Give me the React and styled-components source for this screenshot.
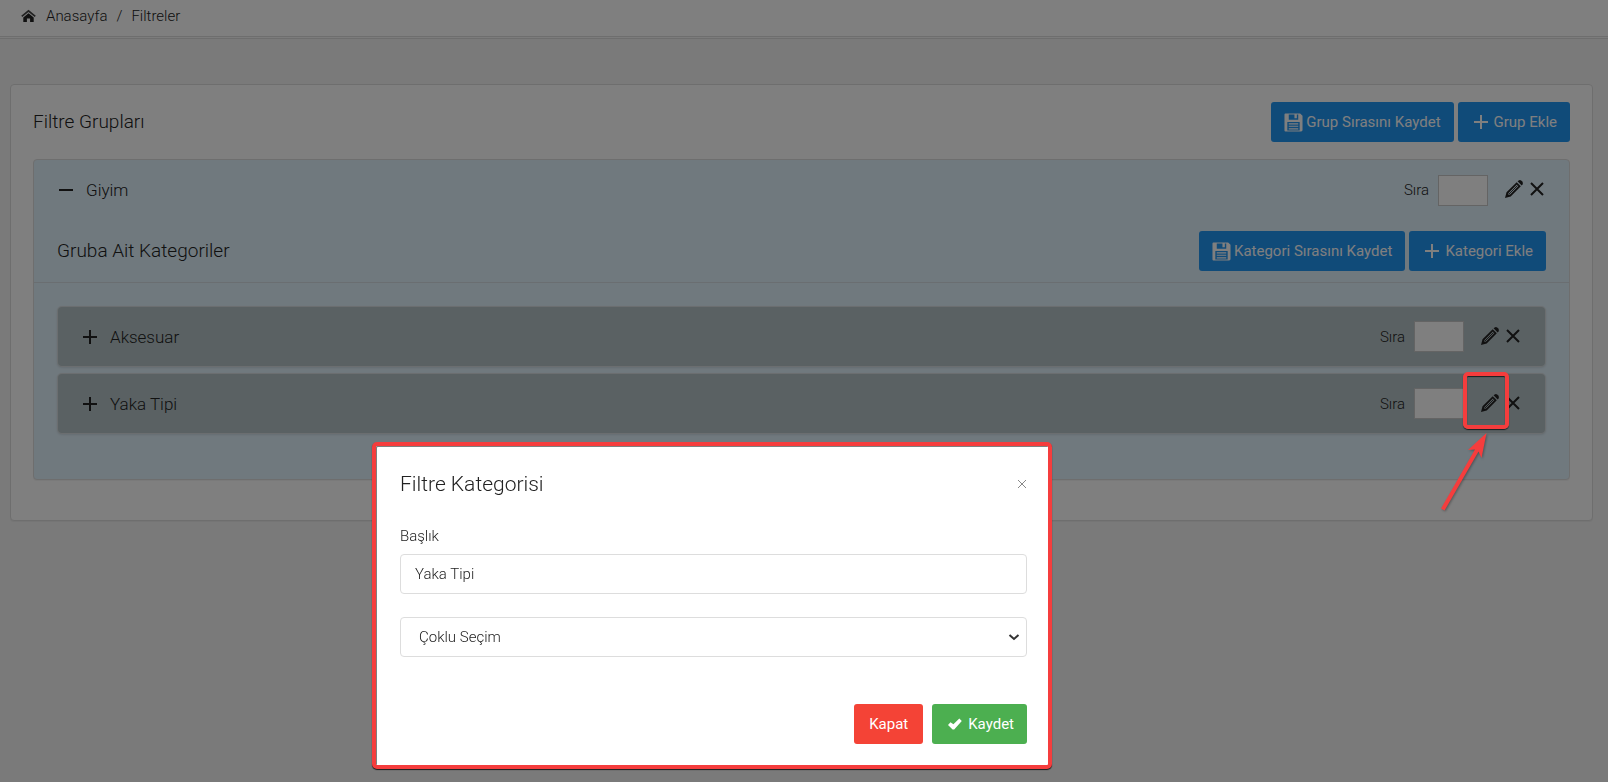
import { useState } from "react";
import styled, { createGlobalStyle } from "styled-components";

const GlobalStyle = createGlobalStyle`
  * {
    box-sizing: border-box;
  }

  body {
    margin: 0;
    background: #f5f5f5;
    color: #222;
    font-family: Roboto, "Liberation Sans", sans-serif;
    font-size: 15px;
    font-weight: 300;
    line-height: 24px;
  }

  button,
  input,
  select {
    font-family: inherit;
    font-size: inherit;
    font-weight: inherit;
    color: inherit;
  }
`;

const BreadcrumbBar = styled.nav`
  background: #fff;
  border-bottom: 1px solid #ddd;
  box-shadow: 0 1px 0 #f8f8f8, 0 2px 0 #ddd;
  padding: 4px 21px 8px;

  ol {
    display: flex;
    align-items: center;
    list-style: none;
    margin: 0;
    padding: 0;
  }

  li {
    display: flex;
  }

  li + li::before {
    content: "/";
    padding: 0 9px;
  }

  a {
    display: flex;
    align-items: center;
    gap: 10px;
    color: inherit;
    text-decoration: none;
  }
`;

const Content = styled.main`
  padding: 47px 15px 24px 10px;
`;

const Card = styled.section`
  background: #fff;
  border: 1px solid #ddd;
  border-radius: 4px;
  box-shadow: 0 1px 1px rgba(0, 0, 0, 0.05);
  padding: 0 22px 40px;
`;

const Header = styled.header`
  display: flex;
  align-items: center;
  justify-content: space-between;
  height: ${({ $inner }) => ($inner ? "61px" : "74px")};
  padding: ${({ $inner }) => ($inner ? "0 23px 2px" : "0")};
  border-bottom: ${({ $inner }) => ($inner ? "1px solid #d5dde2" : "none")};

  h2 {
    margin: 0;
    font-size: 19px;
    font-weight: inherit;
  }
`;

const ButtonGroup = styled.div`
  display: flex;
  gap: ${({ $gap }) => $gap || "4px"};
`;

const colors = {
  primary: "#2196f3",
  danger: "#f44336",
  success: "#4caf50",
};

const Button = styled.button`
  display: inline-flex;
  align-items: center;
  gap: 3px;
  height: 40px;
  padding: 0 15px;
  border: none;
  border-radius: 3px;
  background: ${({ $color }) => colors[$color]};
  color: #fff;
  font-weight: 400;
  cursor: pointer;

  &:has(svg) {
    padding: 0 13px;
  }
`;

const Group = styled.article`
  background: #e1f2fc;
  border: 1px solid #ddd;
  border-radius: 4px;
  box-shadow: 0 1px 1px rgba(0, 0, 0, 0.05);
`;

const Row = styled.div`
  display: flex;
  align-items: center;
  height: ${({ $category }) => ($category ? "59px" : "62px")};
  padding: ${({ $category }) => ($category ? "0 22px" : "0 22px 2px")};
  border-radius: 4px;
  background: ${({ $category }) => ($category ? "#b4c2c6" : "transparent")};
  box-shadow: ${({ $category }) =>
    $category ? "0 0 0 1px #d6dde0, 0 1px 3px rgba(0, 0, 0, 0.2)" : "none"};
`;

const RowTitle = styled.h3`
  display: flex;
  align-items: center;
  gap: 10px;
  margin: 0 auto 0 0;
  font-size: 17px;
  font-weight: inherit;
`;

const IconButton = styled.button`
  position: relative;
  display: inline-flex;
  padding: 0;
  border: none;
  background: none;
  cursor: pointer;
`;

const OrderLabel = styled.label`
  display: flex;
  align-items: center;
  gap: 9px;
  margin-right: 16px;

  input {
    width: 50px;
    height: 31px;
    padding: 0 6px;
    background: #fff;
    border: 1px solid #c8c8c8;
  }
`;

const RowActions = styled.div`
  display: flex;
  gap: 3px;
  padding-bottom: 2px;
`;

const CategoryList = styled.div`
  display: grid;
  gap: 8px;
  padding: 24px 24px 46px;
`;

const Backdrop = styled.div`
  position: fixed;
  inset: 0;
  background: rgba(0, 0, 0, 0.5);
  z-index: 10;
`;

const Marker = styled.span`
  position: absolute;
  top: -21px;
  left: -17px;
  width: 46px;
  height: 57px;
  border: 4px solid #f53d3d;
  border-radius: 5px;
  box-shadow: 0 1px 1px rgba(0, 0, 0, 0.7),
    inset 0 1px 1px rgba(0, 0, 0, 0.7);
  pointer-events: none;
  z-index: 20;
`;

const Arrow = styled.svg`
  position: absolute;
  top: 38px;
  left: -42px;
  filter: drop-shadow(1px 1px 1px rgba(0, 0, 0, 0.3));
  pointer-events: none;
  z-index: 20;
`;

const Dialog = styled.form`
  position: absolute;
  top: 442px;
  left: 372px;
  width: 680px;
  padding: 23px 21px 21px 24px;
  background: #fff;
  border: 4px solid #f53d3d;
  border-radius: 5px;
  box-shadow: 0 1px 1px rgba(0, 0, 0, 0.8),
    inset 1px 1px 0 rgba(0, 0, 0, 0.5);
  z-index: 20;
`;

const DialogHeader = styled.header`
  display: flex;
  align-items: center;
  justify-content: space-between;
  padding: 2px 0 27px;

  h2 {
    margin: 0;
    font-size: 21px;
    font-weight: inherit;
    line-height: 26px;
  }
`;

const DialogBody = styled.div`
  display: flex;
  flex-direction: column;

  label {
    margin-bottom: 6px;
  }

  input,
  select {
    width: 100%;
    height: 40px;
    padding: 0 14px;
    background: #fff;
    border: 1px solid #ddd;
    border-radius: 4px;
  }

  select {
    appearance: none;
    padding: 0 32px 0 18px;
  }
`;

const SelectBox = styled.div`
  position: relative;
  display: flex;
  margin-top: 23px;

  svg {
    position: absolute;
    top: 17px;
    right: 7px;
    pointer-events: none;
  }
`;

const DialogFooter = styled.footer`
  display: flex;
  justify-content: flex-end;
  padding-top: 47px;
`;

const HomeIcon = () => (
  <svg width="15" height="14" viewBox="0 0 15 14" fill="currentColor">
    <path d="M7.500 2.900 L13.700 8 L14.800 6.700 L7.500 0.700 L0.200 6.700 L1.300 8 Z" opacity="0.850" />
    <path d="M7.500 4.300 L12.700 8.600 V13 H9.100 V9.500 H5.900 V13 H2.300 V8.600 Z" />
  </svg>
);

const SaveIcon = () => (
  <svg width="19" height="19" viewBox="0 0 20 20" fill="currentColor">
    <path
      fillRule="evenodd"
      d="M1.500 0.500 H17 L19.500 3 V18 Q19.500 19.500 18 19.500 H1.500 Q0.500 19.500 0.500 18.500 V1.500 Q0.500 0.500 1.500 0.500 Z M5 1.500 V7 H15 V1.500 H13.500 V5.500 H11 V1.500 Z M3.500 9.500 V18.500 H16.500 V9.500 Z"
    />
    <path d="M5 10.700 H15 V12 H5 Z M5 13.300 H15 V14.600 H5 Z M5 16 H15 V17.300 H5 Z" />
  </svg>
);

const PlusIcon = () => (
  <svg width="20" height="20" viewBox="0 0 20 20" fill="currentColor">
    <path d="M9 3 H11 V9 H17 V11 H11 V17 H9 V11 H3 V9 H9 Z" />
  </svg>
);

const MinusIcon = () => (
  <svg width="20" height="20" viewBox="0 0 20 20" fill="currentColor">
    <path d="M3 9 H17 V11 H3 Z" />
  </svg>
);

const CheckIcon = () => (
  <svg width="20" height="20" viewBox="0 0 20 20" fill="currentColor">
    <path d="M14.300 4.500 L8.400 10.300 L5.500 8.200 L3 10.900 L7.600 15.600 H9.200 L16.800 6.900 Z" />
  </svg>
);

const PencilIcon = () => (
  <svg width="20" height="20" viewBox="0 0 20 20" fill="currentColor">
    <path
      fillRule="evenodd"
      d="M1 19 L2.500 13.200 L12.700 3.200 L16.800 7.300 L6.700 17.500 Z M4.600 14 L3.900 15.900 L6 15.400 L14.400 7.100 L12.900 5.600 Z"
    />
    <path d="M4.500 15.500 L13.600 6.400" stroke="currentColor" strokeWidth="0.900" />
    <path d="M13.600 2.300 L14.700 1.400 Q16 0.600 17.500 1.700 L18.300 2.500 Q19.400 4 18.600 5.300 L17.700 6.400 Z" />
  </svg>
);

const CrossIcon = () => (
  <svg width="20" height="20" viewBox="0 0 20 20" stroke="currentColor" strokeWidth="2">
    <path d="M4 4 L16 16 M16 4 L4 16" />
  </svg>
);

const CloseIcon = () => (
  <svg width="10" height="10" viewBox="0 0 10 10" stroke="#888">
    <path d="M1 1 L9 9 M9 1 L1 9" />
  </svg>
);

const ChevronIcon = () => (
  <svg width="12" height="7" viewBox="0 0 12 7" fill="none" stroke="#333" strokeWidth="2">
    <path d="M1.500 1 L6 5 L10.500 1" />
  </svg>
);

const HighlightArrow = () => (
  <Arrow width="56" height="88" viewBox="0 0 56 88" aria-hidden="true">
    <path d="M48.500 2 L43.500 27 L40.500 20.500 L6.500 79.500 L3 77.500 L37 18.500 L30 19 Z" fill="#f53d3d" />
  </Arrow>
);

const OrderRow = ({ title, open, category, highlighted }) => (
  <Row $category={category}>
    <RowTitle>
      <IconButton type="button" aria-label={open ? "Daralt" : "Genişlet"}>
        {open ? <MinusIcon /> : <PlusIcon />}
      </IconButton>
      {title}
    </RowTitle>
    <OrderLabel>
      Sıra
      <input type="text" />
    </OrderLabel>
    <RowActions>
      <IconButton type="button" aria-label="Düzenle">
        <PencilIcon />
        {highlighted && (
          <>
            <Marker />
            <HighlightArrow />
          </>
        )}
      </IconButton>
      <IconButton type="button" aria-label="Sil">
        <CrossIcon />
      </IconButton>
    </RowActions>
  </Row>
);

const CategoryDialog = ({ onClose }) => {
  const [title, setTitle] = useState("Yaka Tipi");

  return (
    <Dialog
      role="dialog"
      aria-labelledby="dialogTitle"
      onSubmit={(e) => e.preventDefault()}
    >
      <DialogHeader>
        <h2 id="dialogTitle">Filtre Kategorisi</h2>
        <IconButton type="button" aria-label="Pencereyi kapat" onClick={onClose}>
          <CloseIcon />
        </IconButton>
      </DialogHeader>
      <DialogBody>
        <label htmlFor="title">Başlık</label>
        <input
          id="title"
          type="text"
          value={title}
          onChange={(e) => setTitle(e.target.value)}
        />
        <SelectBox>
          <select aria-label="Seçim tipi" defaultValue="multi">
            <option value="multi">Çoklu Seçim</option>
            <option value="single">Tekli Seçim</option>
          </select>
          <ChevronIcon />
        </SelectBox>
      </DialogBody>
      <DialogFooter>
        <ButtonGroup $gap="9px">
          <Button type="button" $color="danger" onClick={onClose}>
            Kapat
          </Button>
          <Button type="submit" $color="success">
            <CheckIcon />
            Kaydet
          </Button>
        </ButtonGroup>
      </DialogFooter>
    </Dialog>
  );
};

const App = () => {
  const [dialogOpen, setDialogOpen] = useState(true);

  return (
    <>
      <GlobalStyle />
      <BreadcrumbBar>
        <ol>
          <li>
            <a href="#home">
              <HomeIcon />
              Anasayfa
            </a>
          </li>
          <li>Filtreler</li>
        </ol>
      </BreadcrumbBar>
      <Content>
        <Card>
          <Header>
            <h2>Filtre Grupları</h2>
            <ButtonGroup>
              <Button type="button" $color="primary">
                <SaveIcon />
                Grup Sırasını Kaydet
              </Button>
              <Button type="button" $color="primary">
                <PlusIcon />
                Grup Ekle
              </Button>
            </ButtonGroup>
          </Header>
          <Group>
            <OrderRow title="Giyim" open />
            <Header $inner>
              <h2>Gruba Ait Kategoriler</h2>
              <ButtonGroup>
                <Button type="button" $color="primary">
                  <SaveIcon />
                  Kategori Sırasını Kaydet
                </Button>
                <Button type="button" $color="primary">
                  <PlusIcon />
                  Kategori Ekle
                </Button>
              </ButtonGroup>
            </Header>
            <CategoryList>
              <OrderRow title="Aksesuar" category />
              <OrderRow title="Yaka Tipi" category highlighted />
            </CategoryList>
          </Group>
        </Card>
      </Content>
      {dialogOpen && (
        <>
          <Backdrop />
          <CategoryDialog onClose={() => setDialogOpen(false)} />
        </>
      )}
    </>
  );
};

export default App;
